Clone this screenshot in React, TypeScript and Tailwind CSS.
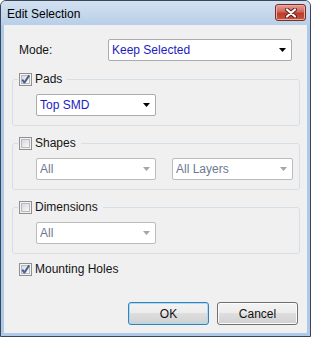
import React from 'react';

function CheckBox({ checked }: { checked: boolean }) {
  return (
    <svg width="13" height="13" viewBox="0 0 13 13" className="shrink-0">
      <defs>
        <linearGradient id="cbFill" x1="0" y1="0" x2="1" y2="1">
          <stop offset="0" stopColor="#d3d6db" />
          <stop offset="1" stopColor="#fbfbfb" />
        </linearGradient>
      </defs>
      <rect x="0.5" y="0.5" width="12" height="12" fill="#f4f4f4" stroke="#8e8f8f" />
      <rect x="2.5" y="2.5" width="8" height="8" fill="url(#cbFill)" stroke="#b6bac0" />
      {checked && (
        <path d="M3.2 6.6 L5.4 9.6 L10.2 2.4" fill="none" stroke="#4b5f8f" strokeWidth="1.9" strokeLinejoin="round" />
      )}
    </svg>
  );
}

function Arrow({ disabled }: { disabled?: boolean }) {
  return (
    <svg width="7" height="4" viewBox="0 0 7 4" className="shrink-0">
      <polygon points="0,0 7,0 3.5,4" fill={disabled ? '#a6a6a6' : '#000'} />
    </svg>
  );
}

function Combo({ text, disabled, className }: { text: string; disabled?: boolean; className: string }) {
  return (
    <div
      className={
        'flex h-[22px] items-center justify-between rounded-[2px] border bg-white pl-[3px] pr-[5px] ' +
        (disabled ? 'border-[#bcbcbc] text-[#6d7891] ' : 'border-[#acacac] text-[#1c1cc0] ') +
        className
      }
    >
      <span className="leading-[20px]">{text}</span>
      <Arrow disabled={disabled} />
    </div>
  );
}

function Group({ label, checked, children }: { label: string; checked: boolean; children: React.ReactNode }) {
  return (
    <fieldset className="ml-[8px] w-[288px] rounded-[3px] border border-[#d5dfe5] pb-[9px] pt-[8px]">
      <legend className="ml-[5px] flex h-[13px] items-center gap-[3px] pl-[1px] pr-[5px]">
        <CheckBox checked={checked} />
        <span className="leading-[13px]">{label}</span>
      </legend>
      <div className="flex gap-[16px] pl-[23px]">{children}</div>
    </fieldset>
  );
}

function Button({ label, primary }: { label: string; primary?: boolean }) {
  return (
    <button
      className={
        'h-[23px] w-[81px] rounded-[3px] border bg-[linear-gradient(#f3f3f3,#ececec_50%,#dedede_50%,#d0d0d0)] text-[12px] text-[#111] ' +
        (primary
          ? 'border-[#3c7fb1] shadow-[inset_0_0_0_1px_#a6dcf8]'
          : 'border-[#707070] shadow-[inset_0_0_0_1px_#fbfbfb]')
      }
    >
      {label}
    </button>
  );
}

export default function App() {
  return (
    <div className="flex h-[337px] w-[311px] flex-col overflow-hidden rounded-t-[6px] border border-[#3a4657] bg-[#aecae8] font-['Liberation_Sans',Arial,sans-serif] text-[12px] text-[#141414]">
      <div className="flex h-[24px] shrink-0 items-start justify-between bg-[linear-gradient(#d3e1f0,#b8cfe9)] pl-[6px] pr-[4px]">
        <span className="mt-[7px] leading-[13px] text-[12px] text-black">Edit Selection</span>
        <div className="mt-[3px] flex h-[17px] w-[31px] items-center justify-center rounded-[3px] border border-[#7a2b23] bg-[linear-gradient(#e2a197,#d0665a_45%,#be3b2c_55%,#c8533f)] shadow-[inset_0_0_0_1px_#eaaea3]">
          <svg width="12" height="10" viewBox="0 0 12 10">
            <path d="M2 1.5 L10 8.5 M10 1.5 L2 8.5" stroke="#5a1d16" strokeWidth="4" strokeLinecap="round" />
            <path d="M2 1.5 L10 8.5 M10 1.5 L2 8.5" stroke="#ffffff" strokeWidth="2.2" strokeLinecap="round" />
          </svg>
        </div>
      </div>
      <div className="mx-[3px] mb-[3px] flex flex-1 flex-col bg-[#f0f0f0]">
        <div className="mt-[14px] flex items-center">
          <span className="w-[104px] pl-[15px]">Mode:</span>
          <Combo text="Keep Selected" className="w-[184px]" />
        </div>
        <div className="mt-[12px]">
          <Group label="Pads" checked>
            <Combo text="Top SMD" className="w-[120px]" />
          </Group>
        </div>
        <div className="mt-[11px]">
          <Group label="Shapes" checked={false}>
            <Combo text="All" disabled className="w-[120px]" />
            <Combo text="All Layers" disabled className="w-[121px]" />
          </Group>
        </div>
        <div className="mt-[11px]">
          <Group label="Dimensions" checked={false}>
            <Combo text="All" disabled className="w-[120px]" />
          </Group>
        </div>
        <div className="ml-[15px] mt-[9px] flex h-[13px] items-center gap-[3px]">
          <CheckBox checked />
          <span className="leading-[13px]">Mounting Holes</span>
        </div>
        <div className="mt-[26px] flex justify-end gap-[8px] pr-[9px]">
          <Button label="OK" primary />
          <Button label="Cancel" />
        </div>
      </div>
    </div>
  );
}
